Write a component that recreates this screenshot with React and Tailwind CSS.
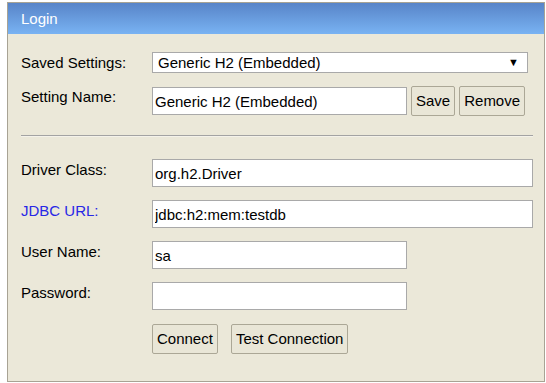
import { useState } from "react";

const field = "h-[28px] border border-[#a9a9a9] bg-white px-[2px] text-[15px] text-black outline-none";
const btn = "h-[30px] rounded-[2px] border border-[#aba796] bg-[#e9e6d7] px-[4px] text-[15px] text-black";

const Row = ({ label, blue, children, className = "" }) => (
  <div className={`flex items-start ${className}`}>
    <label className={`w-[131px] shrink-0 pt-[2px] leading-[17px] ${blue ? "text-[#2727e6]" : "text-black"}`}>{label}</label>
    {children}
  </div>
);

export default function App() {
  const [name, setName] = useState("Generic H2 (Embedded)");
  const [driver, setDriver] = useState("org.h2.Driver");
  const [url, setUrl] = useState("jdbc:h2:mem:testdb");
  const [user, setUser] = useState("sa");
  const [password, setPassword] = useState("");

  return (
    <div className="min-h-screen bg-white pl-[7px] pt-[2px] text-[15px]" style={{ fontFamily: '"Liberation Sans", Arial, sans-serif' }}>
      <div className="w-[538px] border border-[#a8a394] bg-[#ebe8d9]">
        <div className="flex h-[31px] items-center bg-gradient-to-b from-[#5884c8] to-[#79b3f3] pl-[13px] pt-[1px] text-[15px] text-white">Login</div>
        <div className="pb-[27px] pl-[13px] pr-[11px] pt-[18px]">
          <Row label="Saved Settings:">
            <div className="flex h-[21px] w-[376px] items-center justify-between border border-[#a9a9a9] bg-white pl-[5px] pr-[8px] leading-none">
              <span>Generic H2 (Embedded)</span>
              <span className="text-[11px]">▼</span>
            </div>
          </Row>
          <Row label="Setting Name:" className="mt-[13px]">
            <input className={`${field} mt-[1px] w-[255px]`} value={name} onChange={(e) => setName(e.target.value)} />
            <button className={`${btn} ml-[4px]`}>Save</button>
            <button className={`${btn} ml-[4px]`}>Remove</button>
          </Row>
          <div className="mt-[19px] border-t border-b border-t-[#a3a3a3] border-b-[#f4f2ea]" />
          <Row label="Driver Class:" className="mt-[22px]">
            <input className={`${field} flex-1`} value={driver} onChange={(e) => setDriver(e.target.value)} />
          </Row>
          <Row label="JDBC URL:" blue className="mt-[13px]">
            <input className={`${field} flex-1`} value={url} onChange={(e) => setUrl(e.target.value)} />
          </Row>
          <Row label="User Name:" className="mt-[13px]">
            <input className={`${field} w-[255px]`} value={user} onChange={(e) => setUser(e.target.value)} />
          </Row>
          <Row label="Password:" className="mt-[13px]">
            <input type="password" className={`${field} w-[255px]`} value={password} onChange={(e) => setPassword(e.target.value)} />
          </Row>
          <div className="mt-[14px] flex gap-[13px] pl-[131px]">
            <button className={btn}>Connect</button>
            <button className={btn}>Test Connection</button>
          </div>
        </div>
      </div>
    </div>
  );
}
